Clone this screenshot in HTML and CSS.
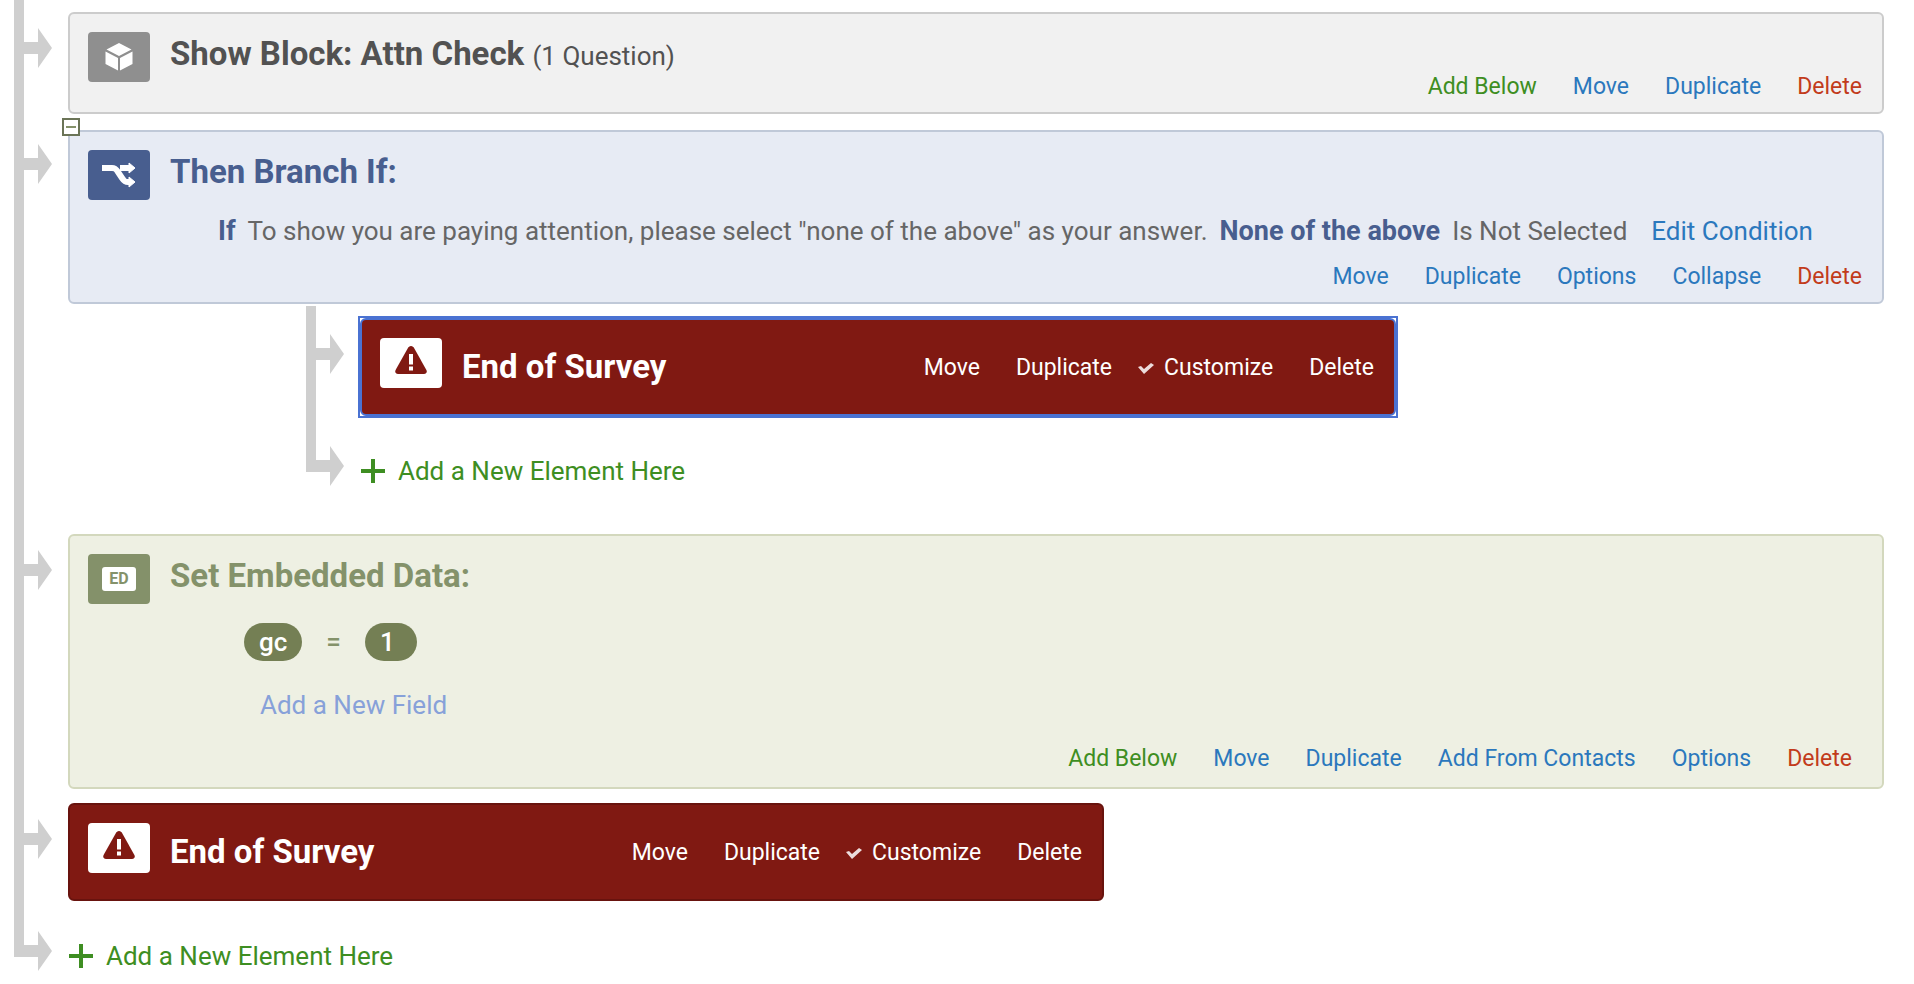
FILE: index.html
```html
<!DOCTYPE html>
<html lang="en">
<head>
    <title>Survey Flow</title>
    <meta charset="UTF-8">
    <meta name="viewport" content="width=device-width, initial-scale=1.0">
    <link rel="stylesheet" href="styles.css">
</head>
<body>
    <!-- shapes used more than once -->
    <svg class="defs" aria-hidden="true">
        <symbol id="arrow" viewBox="0 0 28 40"><path d="M0 14h14V0l14 20-14 20V26H0z"/></symbol>
        <symbol id="plus" viewBox="0 0 26 26"><path d="M11 1h4v10h10v4H15v10h-4V15H1v-4h10z"/></symbol>
        <symbol id="check" viewBox="0 0 16 14"><path d="M0 6l3-1 3 3 7-6 3 2-10 9z"/></symbol>
        <symbol id="warning" viewBox="0 0 32 28">
            <path d="M16 0c1.500 0 2.500 1 3.200 2.200L31.400 24c1 2-.2 4-2.400 4H3c-2.200 0-3.400-2-2.400-4L12.800 2.200C13.500 1 14.500 0 16 0z"/>
            <path class="mark" d="M14 8h4v10.500h-4zM14 20.500h4v4h-4z"/>
        </symbol>
    </svg>

    <ul class="flow">
        <li class="node">
            <div class="connector"><svg><use href="#arrow"/></svg></div>
            <div class="content">
                <div class="element block">
                    <div class="icon">
                        <svg width="28" height="28" viewBox="0 0 28 28" fill="#fff">
                            <path d="M14 0l12.500 6.500L14 13 1.500 6.500zM.5 8.500L13 15v12.500L.5 21zM27.500 8.500L15 15v12.500L27.500 21z"/>
                        </svg>
                    </div>
                    <div class="body">
                        <h2>Show Block: Attn Check <small>(1 Question)</small></h2>
                        <div class="links">
                            <a href="#" class="add">Add Below</a>
                            <a href="#">Move</a>
                            <a href="#">Duplicate</a>
                            <a href="#" class="delete">Delete</a>
                        </div>
                    </div>
                </div>
            </div>
        </li>

        <li class="node">
            <div class="connector"><svg><use href="#arrow"/></svg></div>
            <div class="content">
                <div class="element branch">
                    <button class="toggle" aria-label="Collapse branch"></button>
                    <div class="icon">
                        <svg width="34" height="26" viewBox="0 0 34 26">
                            <path d="M0 6h10c3 0 4 1 6 4l4 6c2 3 3 4 6 4h3M18 6h11" fill="none" stroke="#fff" stroke-width="6"/>
                            <path d="M27 1l6 5-6 5zM27 15l6 5-6 5z" fill="#fff" stroke="#fff"/>
                        </svg>
                    </div>
                    <div class="body">
                        <h2>Then Branch If:</h2>
                        <div class="condition">
                            <b>If</b>
                            <span>To show you are paying attention, please select "none of the above" as your answer.</span>
                            <b>None of the above</b>
                            <span>Is Not Selected</span>
                            <a href="#">Edit Condition</a>
                        </div>
                        <div class="links">
                            <a href="#">Move</a>
                            <a href="#">Duplicate</a>
                            <a href="#">Options</a>
                            <a href="#">Collapse</a>
                            <a href="#" class="delete">Delete</a>
                        </div>
                    </div>
                </div>

                <ul class="flow nested">
                    <li class="node">
                        <div class="connector"><svg><use href="#arrow"/></svg></div>
                        <div class="content">
                            <div class="selected">
                                <div class="element end">
                                    <div class="icon"><svg width="32" height="28"><use href="#warning"/></svg></div>
                                    <div class="body">
                                        <h2>End of Survey</h2>
                                        <div class="links">
                                            <a href="#">Move</a>
                                            <a href="#">Duplicate</a>
                                            <a href="#" class="checked"><svg><use href="#check"/></svg>Customize</a>
                                            <a href="#">Delete</a>
                                        </div>
                                    </div>
                                </div>
                            </div>
                        </div>
                    </li>
                    <li class="node last">
                        <div class="connector"><svg><use href="#arrow"/></svg></div>
                        <div class="content">
                            <a href="#" class="new-element"><svg><use href="#plus"/></svg>Add a New Element Here</a>
                        </div>
                    </li>
                </ul>
            </div>
        </li>

        <li class="node">
            <div class="connector"><svg><use href="#arrow"/></svg></div>
            <div class="content">
                <div class="element embedded">
                    <div class="icon"><span class="ed">ED</span></div>
                    <div class="body">
                        <h2>Set Embedded Data:</h2>
                        <div class="field">
                            <button class="pill">gc</button>
                            <span>=</span>
                            <button class="pill value">1</button>
                        </div>
                        <a href="#" class="new-field">Add a New Field</a>
                        <div class="links">
                            <a href="#" class="add">Add Below</a>
                            <a href="#">Move</a>
                            <a href="#">Duplicate</a>
                            <a href="#">Add From Contacts</a>
                            <a href="#">Options</a>
                            <a href="#" class="delete">Delete</a>
                        </div>
                    </div>
                </div>
            </div>
        </li>

        <li class="node">
            <div class="connector"><svg><use href="#arrow"/></svg></div>
            <div class="content">
                <div class="element end">
                    <div class="icon"><svg width="32" height="28"><use href="#warning"/></svg></div>
                    <div class="body">
                        <h2>End of Survey</h2>
                        <div class="links">
                            <a href="#">Move</a>
                            <a href="#">Duplicate</a>
                            <a href="#" class="checked"><svg><use href="#check"/></svg>Customize</a>
                            <a href="#">Delete</a>
                        </div>
                    </div>
                </div>
            </div>
        </li>

        <li class="node last">
            <div class="connector"><svg><use href="#arrow"/></svg></div>
            <div class="content">
                <a href="#" class="new-element"><svg><use href="#plus"/></svg>Add a New Element Here</a>
            </div>
        </li>
    </ul>
</body>
</html>
```
FILE: styles.css
```css
* {
    box-sizing: border-box;
}

body {
    margin: 0;
    background: #fff;
    color: #666;
    font-family: Roboto, "Liberation Sans", sans-serif;
    font-size: 26px;
    line-height: 32px;
}

a {
    color: #2b78bd;
    text-decoration: none;
}

a:hover {
    text-decoration: underline;
}

.defs {
    display: none;
}

.flow {
    list-style: none;
    margin: 0;
    padding: 0 30px 0 0;
}

.nested {
    margin-left: 224px;
    padding: 0 0 24px;
}

.node {
    display: flex;
}

.connector {
    flex: none;
    width: 68px;
    padding: 28px 0 0 24px;
    background: linear-gradient(#cfcfcf, #cfcfcf) 14px 0 / 10px 100% no-repeat;
}

.last > .connector {
    background-size: 10px 54px;
}

.connector svg {
    display: block;
    width: 28px;
    height: 40px;
    fill: #cfcfcf;
}

.content {
    flex: 1;
    min-width: 0;
}

.element {
    position: relative;
    display: flex;
    gap: 20px;
    margin: 12px 0 2px;
    padding: 18px 20px 11px 18px;
    border: 2px solid;
    border-radius: 6px;
}

.icon {
    flex: none;
    display: flex;
    justify-content: center;
    align-items: center;
    width: 62px;
    height: 50px;
    border-radius: 4px;
}

.body {
    flex: 1;
}

h2 {
    margin: 0;
    padding-top: 3px;
    font-size: 33px;
    line-height: 38px;
}

h2 small {
    font-size: 26px;
    font-weight: normal;
    line-height: 26px;
}

.links {
    display: flex;
    justify-content: flex-end;
    gap: 36px;
    font-size: 23px;
    line-height: 28px;
}

.links .add {
    color: #3e8e22;
}

.links .delete {
    color: #c23b1b;
}

/* block */
.block {
    background: #f1f1f1;
    border-color: #ccc;
    color: #525252;
}

.block .icon {
    background: #8f8f8f;
}

/* branch */
.branch {
    margin-top: 14px;
    background: #e7ebf4;
    border-color: #c0c9d8;
}

.branch .icon {
    background: #485e8f;
}

.branch h2,
.branch b {
    color: #485e8f;
}

.toggle {
    position: absolute;
    top: -14px;
    left: -8px;
    width: 18px;
    height: 18px;
    padding: 0;
    border: 2px solid #6b7457;
    background: linear-gradient(#84916a, #84916a) center / 10px 2px no-repeat #fff;
    cursor: pointer;
}

.condition {
    display: flex;
    gap: 12px;
    margin: 24px 0 16px;
    padding-left: 48px;
}

.condition b {
    font-size: 27px;
}

.condition a {
    margin-left: 12px;
}

/* end of survey */
.end {
    max-width: 1036px;
    padding-bottom: 26px;
    background: #801912;
    border-color: #68130e;
    color: #fff;
}

.end .icon {
    background: #fff;
    fill: #801912;
    padding-bottom: 6px;
}

.mark {
    fill: #fff;
}

.end .body {
    display: flex;
    justify-content: space-between;
    align-items: center;
    padding-top: 10px;
}

.end h2 {
    padding: 0 0 2px;
}

.end a {
    color: #fff;
}

.checked {
    display: flex;
    align-items: center;
    gap: 10px;
    margin-left: -10px;
}

.checked svg {
    width: 16px;
    height: 14px;
    fill: #ecdcdc;
}

.selected {
    max-width: 1036px;
    margin: 12px 0 2px;
    outline: 2px solid #4a72d2;
}

.selected .end {
    margin: 0;
    border-color: #4a72d2;
}

/* embedded data */
.embedded {
    padding: 18px 30px 14px 18px;
    background: #eef0e3;
    border-color: #d3d8bd;
    color: #84926a;
}

.embedded .icon {
    background: #84916a;
}

.ed {
    width: 34px;
    height: 24px;
    border-radius: 3px;
    background: #fff;
    font-size: 16px;
    font-weight: bold;
    line-height: 24px;
    text-align: center;
}

.field {
    display: flex;
    align-items: center;
    gap: 24px;
    margin: 28px 0;
    padding-left: 74px;
}

.field span {
    font-weight: 500;
}

.pill {
    height: 38px;
    padding: 0 15px;
    border: 0;
    border-radius: 19px;
    background: #747f54;
    color: #fff;
    font: inherit;
    font-weight: 500;
    cursor: pointer;
}

.value {
    padding-right: 22px;
}

.new-field {
    display: block;
    margin: 0 0 24px 90px;
    color: #87a1d9;
}

/* add link at the end of a list */
.new-element {
    display: flex;
    align-items: center;
    gap: 12px;
    width: fit-content;
    margin: 37px 0 11px;
    color: #3e8e22;
}

.new-element svg {
    width: 26px;
    height: 26px;
    fill: #3e8e22;
}
```
